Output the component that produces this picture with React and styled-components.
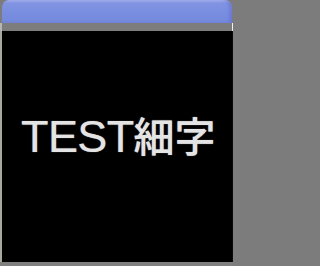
import React from "react";
import styled, { createGlobalStyle } from "styled-components";

const Global = createGlobalStyle`
  html, body { margin: 0; padding: 0; background: #7c7c7c; }
  body { width: 233px; height: 266px; overflow: hidden; }
`;

const Window = styled.div`
  width: 233px;
  height: 266px;
  display: flex;
  flex-direction: column;
  background: #7c7c7c;
`;

const TitleBar = styled.div`
  height: 23px;
  margin: 0 1px 0 2px;
  border-radius: 7px 7px 0 0;
  background: linear-gradient(180deg, #aab7f0 0px, #8194e2 3px, #7a8ee0 12px, #7389dc 23px);
  box-shadow: inset -3px 0 3px rgba(90, 90, 200, 0.35);
`;

const Strip = styled.div`
  height: 8px;
  background: #7d7d7d;
  border-left: 2px solid #b5b5b5;
  border-right: 1px solid #f0f0f0;
`;

const Body = styled.div`
  flex: 1;
  background: #000;
  border-left: 2px solid #a8a8a0;
  border-right: 1px solid #0a0a0a;
  padding-top: 83px;
`;

const BottomStrip = styled.div`
  height: 4px;
  background: #808080;
`;

const Label = styled.div`
  font-family: "Liberation Sans", Arial, sans-serif;
  font-size: 45px;
  line-height: 1;
  letter-spacing: -0.6px;
  color: #e4e4e4;
  padding-left: 19px;
  white-space: nowrap;
  text-shadow: 0 0 1px rgba(228, 228, 228, 0.7);
`;

const Kanji = styled.span`
  font-family: "Noto Sans CJK JP", sans-serif;
  font-size: 41px;
  line-height: 1;
  letter-spacing: 0;
  font-weight: 500;
`;

export default function App() {
  return (
    <>
      <Global />
      <Window>
        <TitleBar />
        <Strip />
        <Body>
          <Label>
            TEST<Kanji>細字</Kanji>
          </Label>
        </Body>
        <BottomStrip />
      </Window>
    </>
  );
}
